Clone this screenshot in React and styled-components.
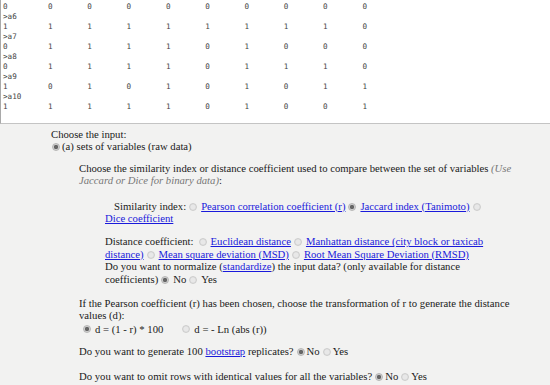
import React from "react";
import styled, { createGlobalStyle } from "styled-components";

const GlobalStyle = createGlobalStyle`
  html, body {
    margin: 0;
    padding: 0;
    background: #f2f2f1;
  }
  body {
    font-family: "Liberation Serif", "Times New Roman", serif;
    font-size: 10.7px;
    line-height: 12.4px;
    color: #1a1a1a;
    overflow: hidden;
  }
`;

const DataBox = styled.div`
  height: 124px;
  box-sizing: border-box;
  overflow: hidden;
  background: #fff;
  border-left: 1px solid #a9a9a9;
  border-bottom: 1px solid #c4c4c4;
`;

const DataLines = styled.div`
  margin-top: -8px;
  padding-left: 2px;
  font-family: "DejaVu Sans Mono", "Liberation Mono", monospace;
  font-size: 7.6px;
  line-height: 10px;
  color: #444;
`;

const Label = styled.div`
  height: 10px;
`;

const Row = styled.div`
  display: grid;
  grid-template-columns: 45px repeat(9, 39.3px);
  height: 10px;
`;

const Form = styled.div`
  width: 516px;
`;

const Level = styled.div`
  padding-left: ${(p) => p.$indent}px;
  padding-right: ${(p) => p.$right || 0}px;
`;

const Para = styled.p`
  margin: ${(p) => p.$top || 0}px 0 0;
  text-indent: ${(p) => p.$lead || 0}px;
`;

const Line = styled.div`
  display: flex;
  align-items: center;
  padding-left: ${(p) => p.$indent || 0}px;
  height: ${(p) => p.$h || 12.4}px;
`;

const A = styled.a`
  color: #1a1adb;
  text-decoration: underline;
`;

const Note = styled.i`
  color: #777;
`;

const Radio = styled.span`
  display: inline-block;
  width: 8px;
  height: 8px;
  border-radius: 50%;
  box-sizing: border-box;
  vertical-align: -1px;
  text-indent: 0;
  margin: 0 ${(p) => p.$right ?? 4}px 0 ${(p) => p.$left ?? 3}px;
  background: ${(p) =>
    p.$on
      ? "radial-gradient(circle, #666 0 1.8px, #d0d0d0 2.5px)"
      : "radial-gradient(circle, #e8e8e8 0 2px, #d4d4d4 4px)"};
  border: 1px solid ${(p) => (p.$on ? "#b5b5b5" : "#cdcdcd")};
`;

const rows = [
  ["a5", "0000000000"],
  ["a6", "1111111110"],
  ["a7", "0111101000"],
  ["a8", "0111101110"],
  ["a9", "1010101011"],
  ["a10", "1111101001"],
];

export default function App() {
  return (
    <>
      <GlobalStyle />
      <DataBox>
        <DataLines>
          {rows.map(([name, vals]) => (
            <React.Fragment key={name}>
              <Label>&gt;{name}</Label>
              <Row>
                {vals.split("").map((v, i) => (
                  <span key={i}>{v}</span>
                ))}
              </Row>
            </React.Fragment>
          ))}
        </DataLines>
      </DataBox>

      <Form>
        <Level $indent={51}>
          <Para $top={4}>Choose the input:</Para>
          <Para>
            <Radio $on $left={1} $right={2} />
            (a) sets of variables (raw data)
          </Para>
        </Level>

        <Level $indent={79}>
          <Para $top={9}>
            Choose the similarity index or distance coefficient used to
            compare between the set of variables{" "}
            <Note>(Use Jaccard or Dice for binary data)</Note>:
          </Para>
        </Level>

        <Level $indent={105} $right={20}>
          <Para $top={13} $lead={9}>
            Similarity index:
            <Radio />
            <A href="#">Pearson correlation coefficient (r)</A>
            <Radio $on />
            <A href="#">Jaccard index (Tanimoto)</A>
            <Radio />
            <A href="#">Dice coefficient</A>
          </Para>
          <Para $top={11}>
            Distance coefficient:
            <Radio $left={5} />
            <A href="#">Euclidean distance</A>
            <Radio />
            <A href="#">Manhattan distance (city block or taxicab distance)</A>
            <Radio />
            <A href="#">Mean square deviation (MSD)</A>
            <Radio />
            <A href="#">Root Mean Square Deviation (RMSD)</A>
            <br />
            Do you want to normalize (<A href="#">standardize</A>) the input
            data? (only available for distance coefficients)
            <Radio $on />
            No
            <Radio />
            Yes
          </Para>
        </Level>

        <Level $indent={79}>
          <Para $top={12}>
            If the Pearson coefficient (r) has been chosen, choose the
            transformation of r to generate the distance values (d):
          </Para>
          <Line $indent={4} $h={14}>
            <Radio $on $left={0} $right={4} />
            d = (1 - r) * 100
            <Radio $left={19} $right={4} />
            d = - Ln (abs (r))
          </Line>
          <Para $top={9}>
            Do you want to generate 100 <A href="#">bootstrap</A> replicates?
            <Radio $on $left={3} $right={2} />
            No
            <Radio $left={3} $right={2} />
            Yes
          </Para>
          <Para $top={13}>
            Do you want to omit rows with identical values for all the
            variables?
            <Radio $on $left={3} $right={2} />
            No
            <Radio $left={3} $right={2} />
            Yes
          </Para>
        </Level>
      </Form>
    </>
  );
}
